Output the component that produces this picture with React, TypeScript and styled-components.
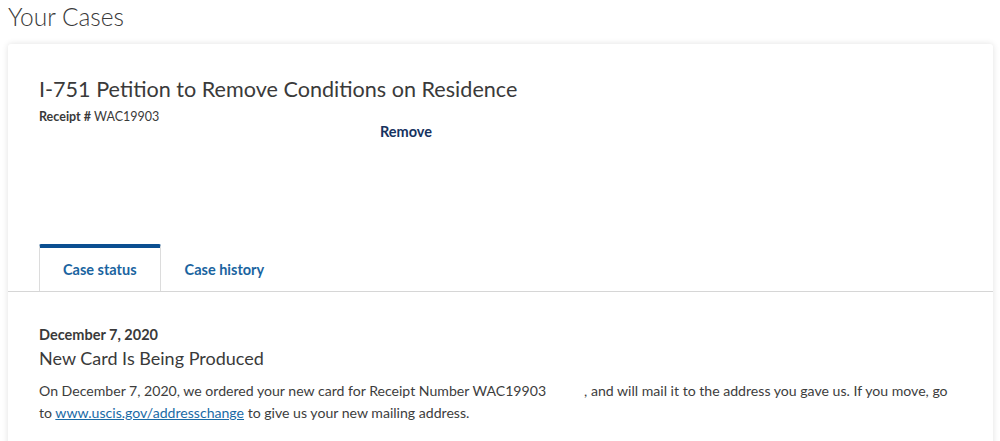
import React, { useState } from 'react';
import styled, { createGlobalStyle } from 'styled-components';

const GlobalStyle = createGlobalStyle`
  html, body {
    margin: 0;
    padding: 0;
    background: #ffffff;
    font-family: Lato, "Open Sans", sans-serif;
    color: #3d3d3d;
  }
`;

const Page = styled.div`
  padding: 0 7px 0 8px;
`;

const PageTitle = styled.h1`
  margin: 0;
  font-size: 24.5px;
  font-weight: 300;
  line-height: 33px;
  color: #3a3a3a;
`;

const Card = styled.section`
  margin-top: 11px;
  background: #fff;
  border-radius: 3px;
  box-shadow: 0 0 6px rgba(0, 0, 0, 0.12);
`;

const CardHeader = styled.div`
  padding: 30px 30px 0 31px;
  min-height: 170px;
`;

const CaseTitle = styled.h2`
  margin: 0;
  font-size: 21.6px;
  font-weight: 400;
  line-height: 30px;
  color: #3a3a3a;
`;

const HeaderRow = styled.div`
  display: flex;
  align-items: flex-start;
`;

const Receipt = styled.div`
  width: 341px;
  font-size: 12.5px;
  line-height: 18px;
  margin-top: 4px;
  color: #3a3a3a;
`;

const ReceiptLabel = styled.b`
  font-weight: 700;
`;

const RemoveButton = styled.button`
  margin-top: 19px;
  padding: 0;
  border: none;
  background: none;
  font-family: inherit;
  font-size: 14.5px;
  font-weight: 700;
  color: #17335f;
  cursor: pointer;
`;

const TabBar = styled.div`
  display: flex;
  padding-left: 31px;
  border-bottom: 1px solid #d6d6d6;
`;

const Tab = styled.button<{ $active?: boolean }>`
  height: 47px;
  margin-bottom: ${(p) => (p.$active ? '-1px' : '0')};
  padding: 0 23px;
  font-family: inherit;
  font-size: 14.5px;
  font-weight: 700;
  color: #1a64a0;
  background: ${(p) => (p.$active ? '#fff' : 'transparent')};
  border: 1px solid ${(p) => (p.$active ? '#dcdcdc' : 'transparent')};
  border-top: 4px solid ${(p) => (p.$active ? '#0b4f91' : 'transparent')};
  border-bottom: none;
  border-radius: 2px 2px 0 0;
  cursor: pointer;
`;

const CardBody = styled.div`
  padding: 33px 30px 30px 31px;
`;

const EventDate = styled.div`
  font-size: 14.5px;
  font-weight: 700;
  line-height: 20px;
  color: #3a3a3a;
`;

const EventTitle = styled.h3`
  margin: 0 0 9px;
  font-size: 18px;
  font-weight: 400;
  line-height: 26px;
  color: #3a3a3a;
`;

const EventText = styled.p`
  margin: 0;
  font-size: 14.1px;
  line-height: 22px;
  color: #3d3d3d;
`;

const Link = styled.a`
  color: #1a6ba6;
  text-decoration: underline;
`;

const Blank = styled.span`
  display: inline-block;
  width: 38px;
`;

export default function App() {
  const [tab, setTab] = useState<'status' | 'history'>('status');

  return (
    <>
      <GlobalStyle />
      <Page>
        <PageTitle>Your Cases</PageTitle>
        <Card>
          <CardHeader>
            <CaseTitle>I-751 Petition to Remove Conditions on Residence</CaseTitle>
            <HeaderRow>
              <Receipt>
                <ReceiptLabel>Receipt #</ReceiptLabel> WAC19903
              </Receipt>
              <RemoveButton>Remove</RemoveButton>
            </HeaderRow>
          </CardHeader>
          <TabBar>
            <Tab $active={tab === 'status'} onClick={() => setTab('status')}>
              Case status
            </Tab>
            <Tab $active={tab === 'history'} onClick={() => setTab('history')}>
              Case history
            </Tab>
          </TabBar>
          <CardBody>
            <EventDate>December 7, 2020</EventDate>
            <EventTitle>New Card Is Being Produced</EventTitle>
            <EventText>
              On December 7, 2020, we ordered your new card for Receipt Number WAC19903
              <Blank />, and will mail it to the address you gave us. If you move, go to{' '}
              <Link href="#">www.uscis.gov/addresschange</Link> to give us your new mailing
              address.
            </EventText>
          </CardBody>
        </Card>
      </Page>
    </>
  );
}
